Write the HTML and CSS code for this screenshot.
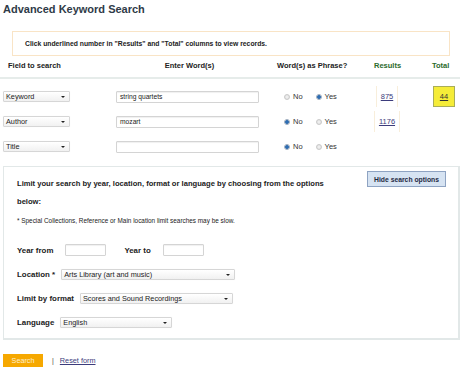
FILE: index.html
```html
<!DOCTYPE html>
<html>
<head>
<meta charset="utf-8">
<link rel="stylesheet" href="styles.css">
</head>
<body>
<h1 class="title">Advanced Keyword Search</h1>
<div class="notice">Click underlined number in "Results" and "Total" columns to view records.</div>

<div class="grid">
  <div class="hd hd-field">Field to search</div>
  <div class="hd hd-words">Enter Word(s)</div>
  <div class="hd hd-phrase">Word(s) as Phrase?</div>
  <div class="hd hd-results">Results</div>
  <div class="hd hd-total">Total</div>
  <div class="rule"></div>

  <div class="cell"><div class="sel sel-field"><span class="sel-text">Keyword</span><span class="arrow"></span></div></div>
  <div class="cell"><div class="inp inp-word">string quartets</div></div>
  <div class="cell radios"><span class="radio"></span><span class="rl">No</span><span class="radio on"></span><span class="rl">Yes</span></div>
  <div class="cell c-res"><a class="res" href="#">875</a></div>
  <div class="cell c-tot"><a class="tot" href="#">44</a></div>

  <div class="cell"><div class="sel sel-field"><span class="sel-text">Author</span><span class="arrow"></span></div></div>
  <div class="cell"><div class="inp inp-word">mozart</div></div>
  <div class="cell radios"><span class="radio on"></span><span class="rl">No</span><span class="radio"></span><span class="rl">Yes</span></div>
  <div class="cell c-res"><a class="res" href="#">1176</a></div>
  <div class="cell c-tot"></div>

  <div class="cell"><div class="sel sel-field"><span class="sel-text">Title</span><span class="arrow"></span></div></div>
  <div class="cell"><div class="inp inp-word"></div></div>
  <div class="cell radios"><span class="radio on"></span><span class="rl">No</span><span class="radio"></span><span class="rl">Yes</span></div>
  <div class="cell c-res"></div>
  <div class="cell c-tot"></div>
</div>

<div class="limits">
  <button class="hide-btn">Hide search options</button>
  <p class="intro">Limit your search by year, location, format or language by choosing from the options<br>below:</p>
  <p class="note">* Special Collections, Reference or Main location limit searches may be slow.</p>
  <div class="frow frow-year">
    <span class="lbl lbl-from">Year from</span><div class="inp inp-year"></div>
    <span class="lbl lbl-to">Year to</span><div class="inp inp-year"></div>
  </div>
  <div class="frow">
    <span class="lbl">Location *</span><div class="sel sel-loc"><span class="sel-text">Arts Library (art and music)</span><span class="arrow"></span></div>
  </div>
  <div class="frow">
    <span class="lbl">Limit by format</span><div class="sel sel-fmt"><span class="sel-text">Scores and Sound Recordings</span><span class="arrow"></span></div>
  </div>
  <div class="frow">
    <span class="lbl">Language</span><div class="sel sel-lang"><span class="sel-text">English</span><span class="arrow"></span></div>
  </div>
</div>

<div class="actions">
  <button class="search-btn">Search</button>
  <span class="sep">|</span>
  <a class="reset" href="#">Reset form</a>
</div>
</body>
</html>
```

FILE: styles.css
```css
* { box-sizing: border-box; }
html, body { margin: 0; padding: 0; background: #fff; }
body {
  font-family: "Liberation Sans", Arial, sans-serif;
  color: #222;
  width: 460px;
  overflow: hidden;
}
.title {
  margin: 0;
  padding: 3px 0 0 3px;
  font-size: 11px;
  line-height: 13px;
  font-weight: bold;
  color: #2f3b48;
}
.notice {
  margin: 15px 10px 0 12px;
  height: 25px;
  border: 1px solid #f9e4c6;
  padding-left: 12px;
  font-size: 6.8px;
  font-weight: bold;
  line-height: 23px;
  color: #222;
}
.grid {
  display: grid;
  grid-template-columns: 113px 161px 85px 50px 1fr;
  grid-template-rows: 21px 7px 25px 25px 25px;
  margin-left: 3px;
}
.hd {
  font-size: 7.5px;
  font-weight: bold;
  line-height: 10px;
  padding-top: 5px;
  height: 21px;
  color: #222;
}
.hd-field { padding-left: 5px; }
.hd-words { text-align: center; padding-right: 14px; }
.hd-results { color: #2b6a2b; padding-left: 12px; }
.hd-total { color: #2b6a2b; padding-left: 20px; }
.rule {
  grid-column: 1 / -1;
  grid-row: 2;
  border-top: 2px solid #e6ecea;
  margin-left: -3px;
}
.cell {
  display: flex;
  align-items: center;
}
.sel {
  position: relative;
  height: 11px;
  border: 1px solid #d6d6d6;
  border-radius: 1px;
  background: linear-gradient(#ffffff, #f1f1f1);
  box-shadow: 0 0 1px #eee;
  font-size: 7.3px;
  line-height: 9px;
  color: #222;
  padding-left: 2px;
  white-space: nowrap;
}
.sel-field { width: 67px; }
.arrow {
  position: absolute;
  right: 4px;
  top: 4px;
  width: 0;
  height: 0;
  border-left: 2px solid transparent;
  border-right: 2px solid transparent;
  border-top: 2px solid #222;
}
.inp {
  height: 12px;
  border: 1px solid #d4d4d4;
  border-radius: 1px;
  background: #fff;
  font-size: 6.7px;
  line-height: 10px;
  padding-left: 3px;
  color: #222;
  box-shadow: inset 0 1px 1px #f0f0f0;
}
.inp-word { width: 143px; }
.radios { padding-left: 7px; font-size: 7.5px; color: #333; }
.radio {
  width: 6px;
  height: 6px;
  border-radius: 50%;
  border: 1px solid #c8c8c8;
  background: radial-gradient(circle, #f4f4f4 0, #dcdcdc 100%);
  display: inline-block;
}
.radio.on {
  border-color: #9aa9bb;
  background: radial-gradient(circle, #2d6db3 0, #2d6db3 1.6px, #c9d4e0 2.2px);
}
.rl { margin-left: 3px; margin-right: 13px; }
.c-res { justify-content: center; }
.res {
  display: block;
  height: 21px;
  line-height: 21px;
  padding: 0 4px;
  border-left: 1px solid #f8eedb;
  border-right: 1px solid #f8eedb;
  font-size: 7.5px;
  color: #3c3c7c;
  text-decoration: underline;
}
.c-tot { padding-left: 21px; }
.tot {
  display: block;
  width: 22px;
  height: 21px;
  line-height: 19px;
  text-align: center;
  background: #f5ec38;
  border: 1px solid #a9ad58;
  font-size: 7.5px;
  color: #333;
  text-decoration: underline;
}
.limits {
  margin: 7px 0 0 3px;
  border-style: solid;
  border-color: #e2e8e8;
  border-width: 1px 2px 2px 1px;
  padding: 5px 12px 5px 13px;
  height: 174px;
}
.hide-btn {
  float: right;
  width: 79px;
  height: 16px;
  margin: -1px 0 0 0;
  padding: 0;
  background: #d6e3f2;
  border: 1px solid #8ea3c2;
  font-family: "Liberation Sans", Arial, sans-serif;
  font-size: 6.8px;
  font-weight: bold;
  color: #1f2a44;
}
.intro {
  margin: 3px 0 0 0;
  font-size: 7.6px;
  font-weight: bold;
  line-height: 18px;
  color: #222;
  white-space: nowrap;
}
.note {
  margin: 5px 0 0 0;
  font-size: 6.4px;
  line-height: 10px;
  color: #222;
}
.frow {
  display: flex;
  align-items: center;
  height: 24px;
}
.frow-year { margin-top: 12px; }
.lbl {
  font-size: 7.9px;
  font-weight: bold;
  color: #222;
  margin-right: 6px;
}
.inp-year { width: 41px; }
.lbl-from { margin-right: 12px; }
.lbl-to { margin-left: 18px; margin-right: 12px; }
.sel-loc { width: 174px; }
.sel-fmt { width: 153px; }
.sel-lang { width: 112px; }
.actions {
  display: flex;
  align-items: center;
  margin: 14px 0 0 3px;
  height: 13px;
}
.search-btn {
  width: 40px;
  height: 13px;
  margin: 0;
  padding: 0;
  border: none;
  background: #f6a800;
  color: #fff0d0;
  font-family: "Liberation Sans", Arial, sans-serif;
  font-size: 7.2px;
}
.sep { margin-left: 9px; font-size: 7px; color: #444; }
.reset {
  margin-left: 6px;
  font-size: 7.3px;
  color: #3c3c7c;
  text-decoration: underline;
}
```
